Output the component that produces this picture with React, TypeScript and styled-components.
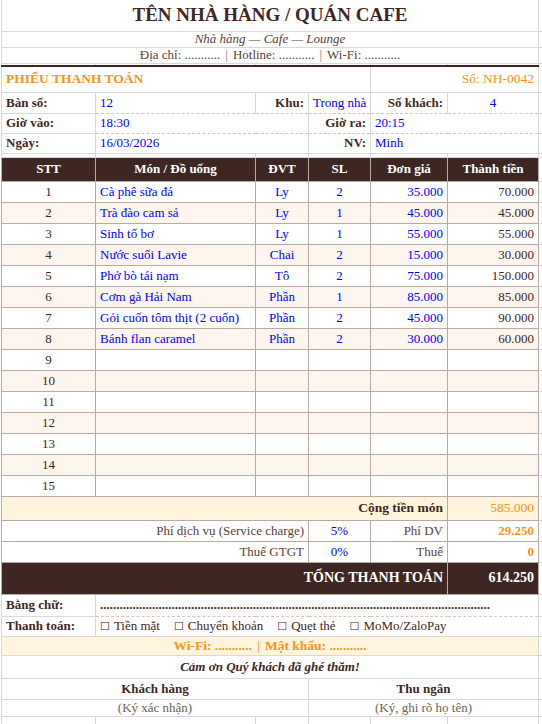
import React from 'react';
import styled, { createGlobalStyle } from 'styled-components';

const GRID = '#d9d9d9';
const TBL = '#b9aaa4';
const DARK = '#3e2723';
const BROWN = '#5d4037';
const ORANGE = '#f7931e';
const BLUE = '#0000ff';
const CREAM = '#fdf6ee';
const YELLOW = '#fff5dc';
const DASH = '#d8c6be';
const SERIF = '"Liberation Serif", "Times New Roman", serif';

const Global = createGlobalStyle`
  html, body { margin: 0; padding: 0; background: #fff; }
  body { font-family: ${SERIF}; }
`;

const Viewport = styled.div`
  width: 542px;
  height: 724px;
  overflow: hidden;
  font-family: ${SERIF};
`;

const Sheet = styled.table`
  border-collapse: collapse;
  table-layout: fixed;
  width: 560px;
  margin-left: 1px;
  font-family: ${SERIF};
  font-size: 13px;
  color: ${DARK};
`;

const Row = styled.tr<{ $h: number; $bg?: string }>`
  height: ${(p) => p.$h}px;
  background: ${(p) => p.$bg ?? 'transparent'};
`;

type CellProps = {
  $align?: 'left' | 'center' | 'right';
  $color?: string;
  $bold?: boolean;
  $italic?: boolean;
  $size?: number;
  $bg?: string;
  $line?: 'grid' | 'tbl';
  $dash?: boolean;
  $noTop?: boolean;
  $darkBottom?: boolean;
};

const Cell = styled.td<CellProps>`
  padding: 0 4px;
  border: 1px solid ${(p) => (p.$line === 'tbl' ? TBL : GRID)};
  ${(p) => (p.$dash ? `border-bottom: 1px dashed ${DASH}; border-top: 1px dashed ${DASH};` : '')}
  ${(p) => (p.$noTop ? 'border-top: none;' : '')}
  ${(p) => (p.$darkBottom ? `border-bottom: 2px solid ${DARK};` : '')}
  text-align: ${(p) => p.$align ?? 'left'};
  color: ${(p) => p.$color ?? DARK};
  font-family: ${SERIF};
  font-weight: ${(p) => (p.$bold ? 700 : 400)};
  font-style: ${(p) => (p.$italic ? 'italic' : 'normal')};
  font-size: ${(p) => p.$size ?? 13}px;
  background: ${(p) => p.$bg ?? 'transparent'};
  line-height: 14px;
  white-space: nowrap;
  overflow: hidden;
  vertical-align: middle;
`;

const Head = styled.th`
  padding: 0 4px;
  border: 1px solid ${TBL};
  background: ${DARK};
  color: #fff;
  font-family: ${SERIF};
  font-weight: 700;
  font-size: 13px;
  line-height: 14px;
  text-align: center;
  white-space: nowrap;
`;

const Sep = styled.span`
  opacity: 0.75;
  margin: 0 5px;
`;

const Options = styled.div`
  display: flex;
  gap: 14px;
`;

const Box = styled.span`
  font-family: "DejaVu Sans", sans-serif;
  font-size: 11px;
  margin-right: 4px;
`;

const items = [
  ['Cà phê sữa đá', 'Ly', '2', '35.000', '70.000'],
  ['Trà đào cam sả', 'Ly', '1', '45.000', '45.000'],
  ['Sinh tố bơ', 'Ly', '1', '55.000', '55.000'],
  ['Nước suối Lavie', 'Chai', '2', '15.000', '30.000'],
  ['Phở bò tái nạm', 'Tô', '2', '75.000', '150.000'],
  ['Cơm gà Hải Nam', 'Phần', '1', '85.000', '85.000'],
  ['Gỏi cuốn tôm thịt (2 cuốn)', 'Phần', '2', '45.000', '90.000'],
  ['Bánh flan caramel', 'Phần', '2', '30.000', '60.000'],
];

const rows = Array.from({ length: 15 }, (_, i) => items[i] ?? ['', '', '', '', '']);

const G = () => <Cell />;

export default function App() {
  return (
    <Viewport>
      <Global />
      <Sheet>
        <colgroup>
          <col style={{ width: 94 }} />
          <col style={{ width: 160 }} />
          <col style={{ width: 53 }} />
          <col style={{ width: 62 }} />
          <col style={{ width: 77 }} />
          <col style={{ width: 91 }} />
          <col style={{ width: 23 }} />
        </colgroup>
        <tbody>
          <Row $h={31}>
            <Cell colSpan={6} $align="center" $bold $size={19} $noTop>
              TÊN NHÀ HÀNG / QUÁN CAFE
            </Cell>
            <Cell $noTop />
          </Row>
          <Row $h={16}>
            <Cell colSpan={6} $align="center" $italic $color={BROWN}>
              Nhà hàng — Cafe — Lounge
            </Cell>
            <G />
          </Row>
          <Row $h={16}>
            <Cell colSpan={6} $align="center" $color={BROWN}>
              Địa chỉ: ...........<Sep>|</Sep>Hotline: ...........<Sep>|</Sep>Wi-Fi: ...........
            </Cell>
            <G />
          </Row>
          <Row $h={3}>
            <Cell $darkBottom />
            <Cell $darkBottom />
            <Cell $darkBottom />
            <Cell $darkBottom />
            <Cell $darkBottom />
            <Cell $darkBottom />
            <G />
          </Row>
          <Row $h={26}>
            <Cell colSpan={4} $bold $color={ORANGE} $size={13.5}>
              PHIẾU THANH TOÁN
            </Cell>
            <Cell colSpan={2} $align="right" $color={ORANGE} $size={13.5}>
              Số: NH-0042
            </Cell>
            <G />
          </Row>
          <Row $h={21}>
            <Cell $bold>Bàn số:</Cell>
            <Cell $color={BLUE} $dash>12</Cell>
            <Cell $bold $align="right" $dash>Khu:</Cell>
            <Cell $color={BLUE} $dash>Trong nhà</Cell>
            <Cell $bold $align="right" $dash>Số khách:</Cell>
            <Cell $color={BLUE} $align="center" $dash>4</Cell>
            <G />
          </Row>
          <Row $h={20}>
            <Cell $bold>Giờ vào:</Cell>
            <Cell colSpan={2} $color={BLUE} $dash>18:30</Cell>
            <Cell $bold $align="right" $dash>Giờ ra:</Cell>
            <Cell colSpan={2} $color={BLUE} $dash>20:15</Cell>
            <G />
          </Row>
          <Row $h={20}>
            <Cell $bold>Ngày:</Cell>
            <Cell colSpan={2} $color={BLUE} $dash>16/03/2026</Cell>
            <Cell $bold $align="right" $dash>NV:</Cell>
            <Cell colSpan={2} $color={BLUE} $dash>Minh</Cell>
            <G />
          </Row>
          <Row $h={4}>
            <Cell />
            <Cell />
            <Cell />
            <Cell />
            <Cell />
            <Cell />
            <G />
          </Row>
          <Row $h={24}>
            <Head>STT</Head>
            <Head>Món / Đồ uống</Head>
            <Head>ĐVT</Head>
            <Head>SL</Head>
            <Head>Đơn giá</Head>
            <Head>Thành tiền</Head>
            <G />
          </Row>
          {rows.map((r, i) => (
            <Row key={i} $h={21} $bg={i % 2 === 1 ? CREAM : '#fff'}>
              <Cell $line="tbl" $align="center">{i + 1}</Cell>
              <Cell $line="tbl" $color={BLUE}>{r[0]}</Cell>
              <Cell $line="tbl" $color={BLUE} $align="center">{r[1]}</Cell>
              <Cell $line="tbl" $color={BLUE} $align="center">{r[2]}</Cell>
              <Cell $line="tbl" $color={BLUE} $align="right">{r[3]}</Cell>
              <Cell $line="tbl" $align="right">{r[4]}</Cell>
              <Cell $bg="#fff" />
            </Row>
          ))}
          <Row $h={24}>
            <Cell colSpan={5} $line="tbl" $bg={YELLOW} $bold $align="right" $size={13.5}>
              Cộng tiền món
            </Cell>
            <Cell $line="tbl" $bg={YELLOW} $color={ORANGE} $align="right" $size={13.5}>
              585.000
            </Cell>
            <G />
          </Row>
          <Row $h={21}>
            <Cell colSpan={3} $line="tbl" $align="right" $color={BROWN}>
              Phí dịch vụ (Service charge)
            </Cell>
            <Cell $line="tbl" $align="center" $color={BLUE}>5%</Cell>
            <Cell $line="tbl" $align="right" $color={BROWN}>Phí DV</Cell>
            <Cell $line="tbl" $align="right" $color={ORANGE} $bold>29.250</Cell>
            <G />
          </Row>
          <Row $h={21}>
            <Cell colSpan={3} $line="tbl" $align="right" $color={BROWN}>
              Thuế GTGT
            </Cell>
            <Cell $line="tbl" $align="center" $color={BLUE}>0%</Cell>
            <Cell $line="tbl" $align="right" $color={BROWN}>Thuế</Cell>
            <Cell $line="tbl" $align="right" $color={ORANGE} $bold>0</Cell>
            <G />
          </Row>
          <Row $h={32}>
            <Cell colSpan={5} $line="tbl" $bg={DARK} $color="#fff" $bold $align="right" $size={14}>
              TỔNG THANH TOÁN
            </Cell>
            <Cell $line="tbl" $bg={DARK} $color="#fff" $bold $align="right" $size={14}>
              614.250
            </Cell>
            <G />
          </Row>
          <Row $h={22}>
            <Cell $bold>Bằng chữ:</Cell>
            <Cell colSpan={5} $dash $bold>
              {'.'.repeat(120)}
            </Cell>
            <G />
          </Row>
          <Row $h={20}>
            <Cell $bold>Thanh toán:</Cell>
            <Cell colSpan={5} $noTop>
              <Options>
                <span><Box>☐</Box>Tiền mặt</span>
                <span><Box>☐</Box>Chuyển khoản</span>
                <span><Box>☐</Box>Quẹt thẻ</span>
                <span><Box>☐</Box>MoMo/ZaloPay</span>
              </Options>
            </Cell>
            <G />
          </Row>
          <Row $h={19}>
            <Cell colSpan={6} $bg={YELLOW} $bold $color={ORANGE} $align="center" $size={13.5}>
              Wi-Fi: ...........<Sep>|</Sep>Mật khẩu: ...........
            </Cell>
            <G />
          </Row>
          <Row $h={23}>
            <Cell colSpan={6} $bold $italic $align="center">
              Cảm ơn Quý khách đã ghé thăm!
            </Cell>
            <G />
          </Row>
          <Row $h={21}>
            <Cell colSpan={3} $bold $align="center">Khách hàng</Cell>
            <Cell colSpan={3} $bold $align="center">Thu ngân</Cell>
            <G />
          </Row>
          <Row $h={17}>
            <Cell colSpan={3} $align="center" $color="#6d5f59">(Ký xác nhận)</Cell>
            <Cell colSpan={3} $align="center" $color="#6d5f59">(Ký, ghi rõ họ tên)</Cell>
            <G />
          </Row>
          <Row $h={21}>
            <Cell />
            <Cell />
            <Cell />
            <Cell />
            <Cell />
            <Cell />
            <G />
          </Row>
        </tbody>
      </Sheet>
    </Viewport>
  );
}
